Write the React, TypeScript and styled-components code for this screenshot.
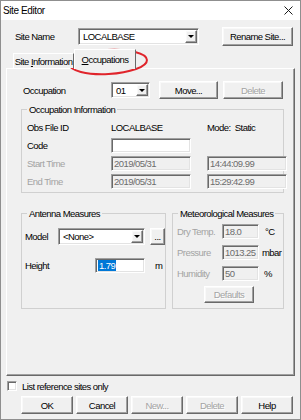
import React from 'react';
import styled, { createGlobalStyle, css } from 'styled-components';

const FONT = `"Liberation Sans", Arial, sans-serif`;
const SIZE = '9.5px';
const TRACK = '-0.55px';
const LINE = '#d0d0d0';
const DIS = '#a3a3a3';

const GlobalStyle = createGlobalStyle`
  html, body { margin: 0; padding: 0; background: #f0f0f0; }
  body { font-family: ${FONT}; font-size: ${SIZE}; letter-spacing: ${TRACK}; color: #000; }
  * { box-sizing: border-box; }
`;

const raised = css`
  border: 1px solid;
  border-color: #ffffff #696969 #696969 #ffffff;
  box-shadow: inset -1px -1px 0 #a0a0a0, inset 1px 1px 0 #f9f9f9;
  background: #f0f0f0;
`;

const sunken = css`
  border: 1px solid;
  border-color: #a0a0a0 #ffffff #ffffff #a0a0a0;
  box-shadow: inset 1px 1px 0 #696969, inset -1px -1px 0 #e3e3e3;
`;

const Window = styled.div`
  position: relative;
  width: 301px;
  height: 420px;
  border: 1px solid #8f8f8f;
  background: #f0f0f0;
  display: flex;
  flex-direction: column;
  overflow: hidden;
`;

const TitleBar = styled.div`
  flex: none;
  height: 19px;
  background: #ffffff;
  display: flex;
  align-items: center;
  justify-content: space-between;
  padding: 0 7px 0 2px;
  font-size: 10px;
  letter-spacing: -0.4px;
`;

const Body = styled.div`
  display: flex;
  flex-direction: column;
  padding: 0 5px;
`;

const Row = styled.div<{ $mt?: number; $h: number; $pl?: number }>`
  display: flex;
  align-items: center;
  flex: none;
  margin-top: ${(p) => p.$mt ?? 0}px;
  height: ${(p) => p.$h}px;
  padding-left: ${(p) => p.$pl ?? 0}px;
`;

const Label = styled.span<{ $w?: number; $pl?: number; $disabled?: boolean; $ml?: number }>`
  flex: none;
  width: ${(p) => (p.$w ? `${p.$w}px` : 'auto')};
  padding-left: ${(p) => p.$pl ?? 0}px;
  margin-left: ${(p) => p.$ml ?? 0}px;
  color: ${(p) => (p.$disabled ? DIS : '#000')};
  white-space: nowrap;
`;

const Combo = styled.div<{ $w: number; $h: number }>`
  ${sunken};
  flex: none;
  width: ${(p) => p.$w}px;
  height: ${(p) => p.$h}px;
  background: #ffffff;
  display: flex;
  padding: 1px;
`;

const ComboValue = styled.span`
  flex: 1;
  display: flex;
  align-items: center;
  padding-left: 3px;
  white-space: nowrap;
`;

const ComboArrow = styled.span`
  ${raised};
  flex: none;
  width: 12px;
  display: flex;
  align-items: center;
  justify-content: center;
  &::after {
    content: '';
    border-left: 3px solid transparent;
    border-right: 3px solid transparent;
    border-top: 3px solid #000;
  }
`;

const Button = styled.button<{ $w: number; $h: number; $ml?: number; $mt?: number; $disabled?: boolean }>`
  ${raised};
  flex: none;
  width: ${(p) => p.$w}px;
  height: ${(p) => p.$h}px;
  margin: ${(p) => p.$mt ?? 0}px 0 0 ${(p) => p.$ml ?? 0}px;
  padding: 0;
  font-family: ${FONT};
  font-size: ${SIZE};
  letter-spacing: ${TRACK};
  color: ${(p) => (p.$disabled ? DIS : '#000')};
  text-shadow: ${(p) => (p.$disabled ? '1px 1px 0 #ffffff' : 'none')};
  display: flex;
  align-items: center;
  justify-content: center;
`;

const TextBox = styled.div<{ $w: number; $h: number; $disabled?: boolean }>`
  ${sunken};
  flex: none;
  width: ${(p) => p.$w}px;
  height: ${(p) => p.$h}px;
  background: ${(p) => (p.$disabled ? '#f0f0f0' : '#ffffff')};
  color: ${(p) => (p.$disabled ? '#6d6d6d' : '#000')};
  display: flex;
  align-items: center;
  padding-left: 2px;
  white-space: nowrap;
`;

const Selected = styled.span`
  background: #0078d7;
  color: #ffffff;
  padding: 0 1px;
  line-height: 11px;
`;

const TabStrip = styled.div`
  display: flex;
  align-items: flex-end;
  height: 19px;
  margin-top: 3px;
  padding-left: 7px;
  position: relative;
  z-index: 1;
`;

const Tab = styled.div<{ $active?: boolean; $w: number }>`
  flex: none;
  width: ${(p) => p.$w}px;
  height: ${(p) => (p.$active ? 20 : 15)}px;
  margin-bottom: ${(p) => (p.$active ? -1 : 0)}px;
  border: 1px solid;
  border-bottom: none;
  border-color: #ffffff #696969 transparent #ffffff;
  background: #f0f0f0;
  display: flex;
  align-items: center;
  justify-content: center;
  padding-top: ${(p) => (p.$active ? 0 : 1)}px;
  white-space: nowrap;
`;

const Panel = styled.div`
  flex: none;
  height: 308px;
  border: 1px solid;
  border-color: #ffffff #696969 #696969 #ffffff;
  box-shadow: inset -1px -1px 0 #a0a0a0;
  display: flex;
  flex-direction: column;
  padding-left: 14px;
`;

const GroupBox = styled.div<{ $w: number; $h: number; $mt?: number }>`
  flex: none;
  width: ${(p) => p.$w}px;
  height: ${(p) => p.$h}px;
  margin-top: ${(p) => p.$mt ?? 0}px;
  display: flex;
  flex-direction: column;
`;

const GroupHead = styled.div`
  flex: none;
  display: flex;
  height: 12px;
  &::before {
    content: '';
    flex: none;
    width: 5px;
    height: 6px;
    align-self: flex-end;
    border-top: 1px solid ${LINE};
    border-left: 1px solid ${LINE};
  }
  &::after {
    content: '';
    flex: 1;
    height: 6px;
    align-self: flex-end;
    border-top: 1px solid ${LINE};
    border-right: 1px solid ${LINE};
  }
`;

const GroupTitle = styled.span`
  flex: none;
  padding: 0 2px;
  line-height: 12px;
  white-space: nowrap;
`;

const GroupBody = styled.div<{ $pt: number; $pl: number }>`
  flex: 1;
  border: 1px solid ${LINE};
  border-top: none;
  padding: ${(p) => p.$pt}px 0 0 ${(p) => p.$pl}px;
  display: flex;
  flex-direction: column;
`;

const InfoGrid = styled.div`
  display: grid;
  grid-template-columns: 68px 80px 80px;
  grid-auto-rows: 18px;
  column-gap: 16px;
  align-items: center;
`;

const Measures = styled.div`
  display: flex;
  gap: 6px;
  margin-top: 15px;
`;

const CheckBox = styled.span`
  ${sunken};
  flex: none;
  width: 10px;
  height: 10px;
  background: #ffffff;
`;

const ButtonRow = styled.div`
  display: flex;
  gap: 3px;
  margin-top: 4px;
  padding-left: 15px;
`;

const Annotation = styled.svg`
  position: absolute;
  left: 65px;
  top: 46px;
  pointer-events: none;
  overflow: visible;
`;

const CloseIcon = () => (
  <svg width="9" height="9" viewBox="0 0 9 9">
    <path d="M0.5 0.5 L8.5 8.5 M8.5 0.5 L0.5 8.5" stroke="#1a1a1a" strokeWidth="1" fill="none" />
  </svg>
);

function GroupFrame(props: { title: string; w: number; h: number; mt?: number; pt: number; pl: number; children: React.ReactNode }) {
  return (
    <GroupBox $w={props.w} $h={props.h} $mt={props.mt}>
      <GroupHead>
        <GroupTitle>{props.title}</GroupTitle>
      </GroupHead>
      <GroupBody $pt={props.pt} $pl={props.pl}>{props.children}</GroupBody>
    </GroupBox>
  );
}

export default function App() {
  return (
    <>
      <GlobalStyle />
      <Window>
        <TitleBar>
          <span>Site Editor</span>
          <CloseIcon />
        </TitleBar>
        <Body>
          <Row $mt={7} $h={19}>
            <Label $w={72} $pl={9}>Site Name</Label>
            <Combo $w={121} $h={17}>
              <ComboValue>LOCALBASE</ComboValue>
              <ComboArrow />
            </Combo>
            <Button $w={71} $h={19} $ml={23}>Rename Site...</Button>
          </Row>

          <TabStrip>
            <Tab $w={61}>Site&nbsp;<u>I</u>nformation</Tab>
            <Tab $w={62} $active><u>O</u>ccupations</Tab>
          </TabStrip>

          <Panel>
            <Row $mt={12} $h={18} $pl={2}>
              <Label $w={88}>Occupation</Label>
              <Combo $w={39} $h={16}>
                <ComboValue>01</ComboValue>
                <ComboArrow />
              </Combo>
              <Button $w={59} $h={18} $ml={9}>Move...</Button>
              <Button $w={60} $h={18} $ml={5} $disabled>Delete</Button>
            </Row>

            <GroupFrame title="Occupation Information" w={263} h={89} mt={5} pt={2} pl={5}>
              <InfoGrid>
                <Label>Obs File ID</Label>
                <Label>LOCALBASE</Label>
                <Label>Mode:&nbsp;&nbsp;Static</Label>

                <Label>Code</Label>
                <TextBox $w={80} $h={15} />
                <span />

                <Label $disabled>Start Time</Label>
                <TextBox $w={80} $h={15} $disabled>2019/05/31</TextBox>
                <TextBox $w={80} $h={15} $disabled>14:44:09.99</TextBox>

                <Label $disabled>End Time</Label>
                <TextBox $w={80} $h={15} $disabled>2019/05/31</TextBox>
                <TextBox $w={80} $h={15} $disabled>15:29:42.99</TextBox>
              </InfoGrid>
            </GroupFrame>

            <Measures>
              <GroupFrame title="Antenna Measures" w={145} h={101} pt={8} pl={3}>
                <Row $h={17}>
                  <Label $w={33}>Model</Label>
                  <Combo $w={87} $h={17}>
                    <ComboValue>&lt;None&gt;</ComboValue>
                    <ComboArrow />
                  </Combo>
                  <Button $w={15} $h={17} $ml={5}>...</Button>
                </Row>
                <Row $mt={12} $h={16}>
                  <Label $w={70}>Height</Label>
                  <TextBox $w={50} $h={15}>
                    <Selected>1.79</Selected>
                  </TextBox>
                  <Label $ml={10}>m</Label>
                </Row>
              </GroupFrame>

              <GroupFrame title="Meteorological Measures" w={112} h={101} pt={4} pl={4}>
                <Row $h={15}>
                  <Label $w={45} $disabled>Dry Temp.</Label>
                  <TextBox $w={37} $h={15} $disabled>18.0</TextBox>
                  <Label $ml={6}>°C</Label>
                </Row>
                <Row $mt={6} $h={15}>
                  <Label $w={45} $disabled>Pressure</Label>
                  <TextBox $w={37} $h={15} $disabled>1013.25</TextBox>
                  <Label $ml={3}>mbar</Label>
                </Row>
                <Row $mt={6} $h={15}>
                  <Label $w={45} $disabled>Humidity</Label>
                  <TextBox $w={37} $h={15} $disabled>50</TextBox>
                  <Label $ml={5}>%</Label>
                </Row>
                <Row $h={22}>
                  <Button $w={50} $h={17} $ml={27} $mt={5} $disabled>Defaults</Button>
                </Row>
              </GroupFrame>
            </Measures>
          </Panel>

          <Row $mt={4} $h={12} $pl={1}>
            <CheckBox />
            <Label $ml={5}>List reference sites only</Label>
          </Row>

          <ButtonRow>
            <Button $w={52} $h={18}>OK</Button>
            <Button $w={52} $h={18}>Cancel</Button>
            <Button $w={52} $h={18} $disabled>New...</Button>
            <Button $w={52} $h={18} $disabled>Delete</Button>
            <Button $w={52} $h={18}>Help</Button>
          </ButtonRow>
        </Body>

        <Annotation width="84" height="29" viewBox="0 0 84 29">
          <ellipse cx="42" cy="15" rx="39" ry="12" fill="none" stroke="#e0242b" strokeWidth="2" transform="rotate(-3 42 15)" />
        </Annotation>
      </Window>
    </>
  );
}
